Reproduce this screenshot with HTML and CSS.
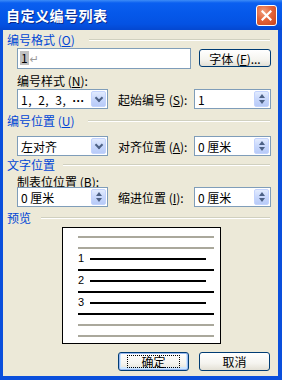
FILE: index.html
```html
<!DOCTYPE html>
<html lang="zh-CN">
<head>
    <meta charset="UTF-8">
    <meta name="viewport" content="width=device-width, initial-scale=1.0">
    <title>自定义编号列表</title>
    <link rel="stylesheet" href="styles.css">
</head>
<body>
    <div class="dialog">
        <div class="titlebar">
            <span class="title">自定义编号列表</span>
            <span class="close-btn">
                <svg width="11" height="11" viewBox="0 0 11 11">
                    <path d="M1.5 1.5 L9.5 9.5 M9.5 1.5 L1.5 9.5" stroke="#fff" stroke-width="2.2" stroke-linecap="square"/>
                </svg>
            </span>
        </div>

        <div class="client">
            <!-- 编号格式 -->
            <div class="group-head"><span>编号格式 (<u>O</u>)</span><i class="rule"></i></div>
            <div class="row row-format">
                <div class="field field-format"><span class="sel">1</span><span class="para">↵</span></div>
                <button class="btn">字体 (<u>F</u>)...</button>
            </div>
            <div class="sub-label">编号样式 (<u>N</u>):</div>
            <div class="row">
                <div class="field combo"><span class="val val-list">1, 2, 3, <b class="dots">···</b></span><span class="drop"></span></div>
                <span class="side-label">起始编号 (<u>S</u>):</span>
                <div class="field spin"><span class="val">1</span><span class="spin-btn"></span></div>
            </div>

            <!-- 编号位置 -->
            <div class="group-head head-pos"><span>编号位置 (<u>U</u>)</span><i class="rule"></i></div>
            <div class="row row-pos">
                <div class="field combo"><span class="val">左对齐</span><span class="drop"></span></div>
                <span class="side-label">对齐位置 (<u>A</u>):</span>
                <div class="field spin"><span class="val">0 厘米</span><span class="spin-btn"></span></div>
            </div>

            <!-- 文字位置 -->
            <div class="group-head head-text"><span>文字位置</span><i class="rule"></i></div>
            <div class="sub-label sub-tab">制表位位置 (<u>B</u>):</div>
            <div class="row row-tab">
                <div class="field combo"><span class="val">0 厘米</span><span class="spin-btn"></span></div>
                <span class="side-label">缩进位置 (<u>I</u>):</span>
                <div class="field spin"><span class="val">0 厘米</span><span class="spin-btn"></span></div>
            </div>

            <!-- 预览 -->
            <div class="group-head head-preview"><span>预览</span><i class="rule"></i></div>
            <div class="preview">
                <div class="pv-row"><i class="ln gray"></i></div>
                <div class="pv-row"><i class="ln gray"></i></div>
                <div class="pv-row"><b class="num">1</b><i class="ln short"></i></div>
                <div class="pv-row"><i class="ln"></i></div>
                <div class="pv-row"><b class="num">2</b><i class="ln short"></i></div>
                <div class="pv-row"><i class="ln"></i></div>
                <div class="pv-row"><b class="num">3</b><i class="ln short"></i></div>
                <div class="pv-row"><i class="ln"></i></div>
                <div class="pv-row"><i class="ln gray"></i></div>
                <div class="pv-row"><i class="ln gray"></i></div>
            </div>

            <div class="actions">
                <button class="btn btn-default"><span class="focus">确定</span></button>
                <button class="btn">取消</button>
            </div>
        </div>
    </div>
</body>
</html>
```

FILE: styles.css
```css
html, body {
    margin: 0;
    padding: 0;
}

body {
    width: 282px;
    height: 380px;
    overflow: hidden;
    font-family: "Noto Sans CJK SC", "DejaVu Sans", sans-serif;
    font-size: 12px;
    color: #000;
}

.dialog {
    width: 282px;
    height: 380px;
    box-sizing: border-box;
    display: flex;
    flex-direction: column;
    background: #0a4fdc;
}

.titlebar {
    height: 30px;
    flex: none;
    display: flex;
    align-items: center;
    justify-content: space-between;
    padding: 0 5px 0 6px;
    background: linear-gradient(#3d8cf7 0%, #0a5ff0 10%, #0558ea 45%, #0452e3 80%, #0447d0 100%);
}

.title {
    color: #fff;
    font-weight: bold;
    font-size: 14px;
    letter-spacing: 0.5px;
    text-shadow: 1px 1px 0 #0a2a8c;
}

.close-btn {
    width: 19px;
    height: 19px;
    border: 1px solid #fff;
    border-radius: 3px;
    display: flex;
    align-items: center;
    justify-content: center;
    background: radial-gradient(circle at 35% 30%, #f2a07e 0%, #e2643a 45%, #c8431c 100%);
}

.client {
    flex: 1;
    margin: 0 4px 4px 3px;
    padding: 3px 0 0 0;
    background: #ece9d8;
    display: flex;
    flex-direction: column;
}

.group-head {
    display: flex;
    align-items: center;
    height: 14px;
    line-height: 14px;
    padding-left: 4px;
    padding-right: 8px;
    color: #0046d5;
}

.group-head span {
    white-space: nowrap;
}

.rule {
    flex: 1;
    height: 1px;
    margin-left: 14px;
    background: #d0d0bf;
    border-bottom: 1px solid #fff;
}

.head-pos { margin-top: 5px; }
.head-text { margin-top: 3px; height: 12px; line-height: 12px; }
.head-preview { margin-top: 4px; }

.head-text .rule { margin-left: 8px; }
.head-preview .rule { margin-left: 10px; }

.sub-label {
    margin-top: 6px;
    padding-left: 14px;
    height: 14px;
    line-height: 14px;
}

.sub-tab {
    margin-top: 5px;
    height: 11px;
    line-height: 12px;
}

.row {
    display: flex;
    align-items: center;
    padding-left: 14px;
    margin-top: 1px;
    height: 20px;
}

.row-format { margin-top: 1px; }
.row-pos { margin-top: 8px; }
.row-tab { margin-top: 0; }

.field {
    box-sizing: border-box;
    height: 20px;
    border: 1px solid #7f9db9;
    background: #fff;
    display: flex;
    align-items: center;
    padding: 0 1px 0 2px;
}

.field-format {
    width: 174px;
    height: 21px;
}

.sel {
    background: #c0c0c0;
    line-height: 14px;
    padding: 0 1px;
}

.para {
    color: #9a9a9a;
    font-size: 11px;
    margin-left: 1px;
}

.combo {
    width: 91px;
}

.spin {
    width: 77px;
}

.val {
    flex: 1;
    white-space: nowrap;
    padding-left: 1px;
    overflow: hidden;
}

.val-list {
    letter-spacing: 0.5px;
    word-spacing: 3px;
}

.dots {
    font-family: "Liberation Sans", sans-serif;
    font-weight: bold;
    letter-spacing: 0;
}

.side-label {
    width: 76px;
    margin-left: 10px;
    white-space: nowrap;
}

.drop, .spin-btn {
    flex: none;
    width: 15px;
    height: 16px;
    box-sizing: border-box;
    border: 1px solid #c3d3fd;
    border-radius: 2px;
    background: linear-gradient(#e2ebfe, #c8d7fb 50%, #b8cbf8);
    position: relative;
}

.drop::after {
    content: "";
    position: absolute;
    left: 4px;
    top: 3px;
    width: 4px;
    height: 4px;
    border-right: 2px solid #4d6185;
    border-bottom: 2px solid #4d6185;
    transform: rotate(45deg);
}

.spin-btn::before, .spin-btn::after {
    content: "";
    position: absolute;
    left: 4px;
    width: 0;
    height: 0;
    border-left: 3px solid transparent;
    border-right: 3px solid transparent;
}

.spin-btn::before {
    top: 2px;
    border-bottom: 4px solid #4d6185;
}

.spin-btn::after {
    bottom: 2px;
    border-top: 4px solid #4d6185;
}

.btn {
    box-sizing: border-box;
    width: 72px;
    height: 18px;
    margin-left: 8px;
    padding: 0;
    font-family: inherit;
    font-size: 12px;
    color: #000;
    border: 1px solid #003c74;
    border-radius: 3px;
    background: linear-gradient(#ffffff 0%, #f5f4ef 60%, #e3e0d5 100%);
    display: flex;
    align-items: center;
    justify-content: center;
}

.preview {
    box-sizing: border-box;
    width: 159px;
    height: 117px;
    margin: 2px 0 0 59px;
    border: 1px solid #000;
    background: #fff;
    padding: 3px 6px 0 15px;
}

.pv-row {
    height: 11px;
    display: flex;
    align-items: center;
}

.ln {
    flex: 1;
    height: 2px;
    background: #000;
}

.ln.gray {
    background: #aaa89c;
}

.ln.short {
    margin-left: 5px;
    margin-right: 8px;
}

.num {
    font-family: "Liberation Sans", sans-serif;
    font-weight: normal;
    font-size: 11px;
    width: 7px;
    line-height: 11px;
}

.actions {
    display: flex;
    justify-content: flex-end;
    padding-right: 8px;
    margin-top: 8px;
}

.actions .btn {
    width: 71px;
    height: 19px;
    margin-left: 10px;
}

.btn-default {
    box-shadow: inset 0 0 0 1px #98b8f0, inset 0 -1px 0 2px #cee7ff;
}

.focus {
    border: 1px dotted #000;
    padding: 0 13px;
    line-height: 11px;
    height: 11px;
    display: flex;
    align-items: center;
}
```
